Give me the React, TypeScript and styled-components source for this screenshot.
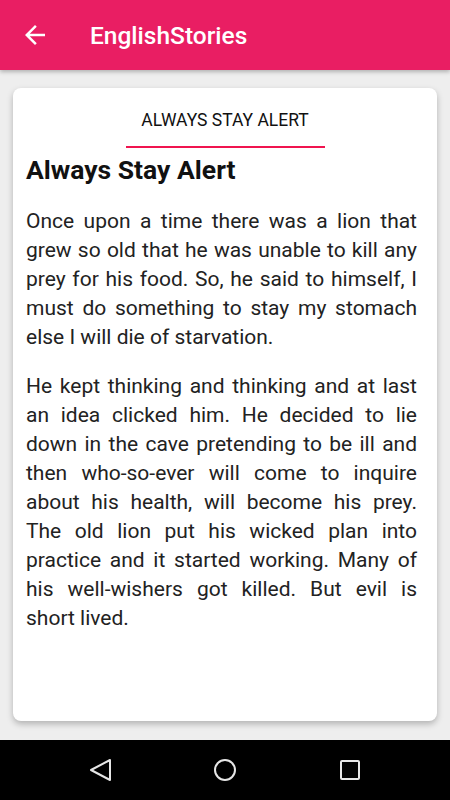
import React from 'react';
import styled, { createGlobalStyle } from 'styled-components';

const GlobalStyle = createGlobalStyle`
	html, body {
		margin: 0;
		padding: 0;
		background: #eeeeee;
		font-family: Roboto, 'Liberation Sans', sans-serif;
	}
`;

const SScreen = styled.div`
	width: 450px;
	height: 800px;
	display: flex;
	flex-direction: column;
	background: #eeeeee;
	overflow: hidden;
`;

const SAppBar = styled.div`
	height: 70px;
	flex-shrink: 0;
	background: #e91e63;
	display: flex;
	align-items: center;
	padding: 0 0 0 20px;
	box-shadow: 0 2px 4px rgba(0, 0, 0, 0.25);
	position: relative;
	z-index: 1;
`;

const SBack = styled.div`
	width: 30px;
	height: 30px;
	display: flex;
	margin-right: 40px;
`;

const STitle = styled.div`
	color: #fff;
	font-size: 24.5px;
	font-weight: 500;
`;

const SBody = styled.div`
	flex: 1;
	padding: 18px 13px 19px;
	display: flex;
`;

const SCard = styled.div`
	flex: 1;
	background: #fff;
	border-radius: 8px;
	box-shadow: 0 3px 6px rgba(0, 0, 0, 0.25);
	display: flex;
	flex-direction: column;
	padding: 0 20px 0 13px;
`;

const STabs = styled.div`
	display: flex;
	justify-content: center;
	margin-right: -7px;
`;

const STab = styled.div<{ active?: boolean }>`
	width: 199px;
	height: 60px;
	box-sizing: border-box;
	display: flex;
	align-items: center;
	justify-content: center;
	padding-top: 6px;
	font-size: 17.5px;
	color: #111;
	border-bottom: 2px solid ${p => (p.active ? '#f0144f' : 'transparent')};
`;

const SHeading = styled.h1`
	margin: 6px 0 22px;
	font-size: 26.5px;
	font-weight: 700;
	color: #111;
`;

const SPara = styled.p`
	margin: 0 0 20px;
	font-size: 21px;
	line-height: 29px;
	color: #222;
	text-align: justify;
`;

const SNavBar = styled.div`
	height: 60px;
	flex-shrink: 0;
	background: #000;
	display: flex;
	align-items: center;
	justify-content: center;
	gap: 101px;
`;

const NavIcon = styled.svg`
	width: 24px;
	height: 24px;
`;

const App: React.FC = () => {
	return (
		<>
			<GlobalStyle />
			<SScreen>
				<SAppBar>
					<SBack>
						<svg width="30" height="30" viewBox="0 0 24 24">
							<path d="M20 11H7.83l5.59-5.59L12 4l-8 8 8 8 1.41-1.41L7.83 13H20v-2z" fill="#fff" />
						</svg>
					</SBack>
					<STitle>EnglishStories</STitle>
				</SAppBar>
				<SBody>
					<SCard>
						<STabs>
							<STab active>ALWAYS STAY ALERT</STab>
						</STabs>
						<SHeading>Always Stay Alert</SHeading>
						<SPara>
							Once upon a time there was a lion that grew so old that he was unable to kill any prey for his food. So,
							he said to himself, I must do something to stay my stomach else I will die of starvation.
						</SPara>
						<SPara>
							He kept thinking and thinking and at last an idea clicked him. He decided to lie down in the cave
							pretending to be ill and then who-so-ever will come to inquire about his health, will become his prey.
							The old lion put his wicked plan into practice and it started working. Many of his well-wishers got
							killed. But evil is short lived.
						</SPara>
					</SCard>
				</SBody>
				<SNavBar>
					<NavIcon viewBox="0 0 24 24">
						<path d="M22 2 L22 22 L3 12 Z" fill="none" stroke="#e6e6e6" strokeWidth="2" strokeLinejoin="round" />
					</NavIcon>
					<NavIcon viewBox="0 0 24 24">
						<circle cx="12" cy="12" r="10" fill="none" stroke="#e6e6e6" strokeWidth="2" />
					</NavIcon>
					<NavIcon viewBox="0 0 24 24">
						<rect x="3" y="3" width="18" height="18" rx="1" fill="none" stroke="#e6e6e6" strokeWidth="2" />
					</NavIcon>
				</SNavBar>
			</SScreen>
		</>
	);
};

export default App;
